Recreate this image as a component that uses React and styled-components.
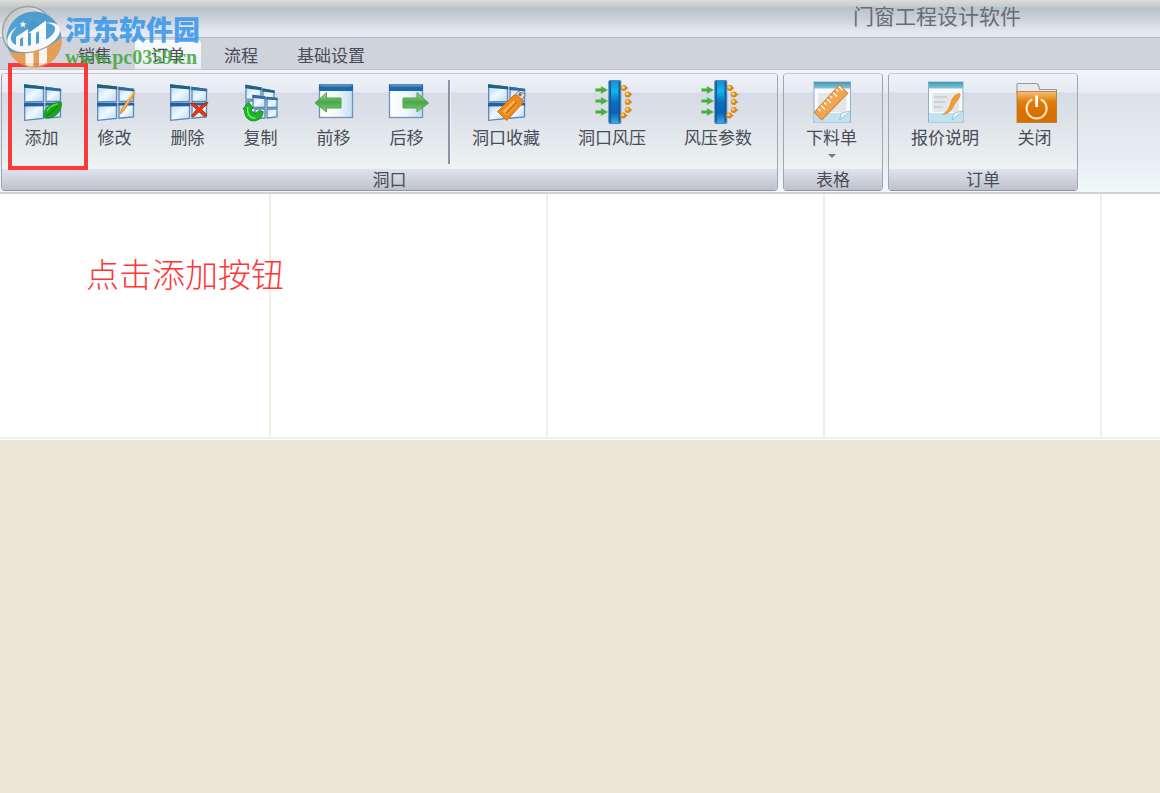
import React, { useState } from "react";
import styled, { createGlobalStyle } from "styled-components";

const Pane = ({ points }) => (
  <polygon points={points} fill="url(#glass)" stroke="#5b88b5" strokeWidth="1.3" />
);

const WindowShape = () => (
  <g>
    <path d="M4 4.4 41 9V37.4L4 41Z" fill="#dbe4ee" />
    <Pane points="4.7,5 23.5,7 23.5,21.5 4.7,22" />
    <Pane points="26,7.5 40.5,9.5 40.5,21.5 26,21.5" />
    <Pane points="4.7,24 23.5,24 23.5,38.4 4.7,40.3" />
    <Pane points="26,24 40.5,24 40.5,36.8 26,38.2" />
    <path d="M4 4.3 24.2 6.4V9.6L4 7.8Z" fill="#22617c" />
    <path d="M25.4 6.8 41.2 8.8V11.6L25.4 10Z" fill="#2f6b9f" />
    <path d="M4 22.8H24.2V26.2L4 26.6ZM25.4 22.8H41.2V25.6H25.4Z" fill="#2261a3" />
  </g>
);

const AddIcon = () => (
  <Icon>
    <WindowShape />
    <path d="M24.5 37.8C22 28 31 22.5 41.3 22.2 42.5 31 35 39.5 24.5 37.8Z" fill="#1aa51a" stroke="#118411" strokeWidth="0.7" />
    <path d="M26.5 36C31 33 34.5 29.5 38 25.5" fill="none" stroke="#0c6f14" />
    <path d="M27 31C29 27.5 32.5 25 37.5 24" fill="none" stroke="#5fd644" strokeWidth="1.6" />
  </Icon>
);

const EditIcon = () => (
  <Icon>
    <WindowShape />
    <path d="M41.8 10.5 40.8 15.5 30.5 31 27.6 33.8 28.2 29.5Z" fill="#f39a1f" stroke="#dd8427" strokeWidth="0.8" />
    <path d="M41 11.5 29.5 30" fill="none" stroke="#ffd18a" />
  </Icon>
);

const DeleteIcon = () => (
  <Icon>
    <WindowShape />
    <path
      d="M24 23.2 27 23 33 27.5 39 22.8 42 22.5 35.8 29.5 41 35 38.5 36.8 33 31.8 28 36.5 25.5 36 30.5 29.5Z"
      fill="#e03a12"
      stroke="#b32408"
      strokeWidth="0.9"
    />
  </Icon>
);

const CopyIcon = () => (
  <Icon>
    <Pane points="7,5.5 22,8 22,20 7,19" />
    <Pane points="24,9 35,11 35,20 24,20" />
    <Pane points="7,21 17,21 17,32 7,33" />
    <path d="M6.3 4.8 22.6 7.3V10.4L6.3 8.2ZM23.4 8.4 35.6 10.4V13L23.4 11.4Z" fill="#22617c" />
    <Pane points="14,15.5 26,17 26,27.5 14,27.5" />
    <Pane points="28,17.5 38,18.5 38,27.5 28,27.5" />
    <Pane points="16,29 26,29 26,38 16,39" />
    <Pane points="28,29 38,29 38,37 28,38" />
    <path d="M13.4 14.8 26.6 16.4V19.2L13.4 17.8ZM27.4 16.8 38.6 17.8V20.2L27.4 19.4Z" fill="#2f6b9f" />
    <path
      d="M9.5 22 14.5 28.5H12.5C12 33.5 16.5 35 20 30.5L24.2 31.5C24 37.5 19 41.5 13 40.8 8 40 5.2 35 5.6 29.5L4 29Z"
      fill="#1db526"
      stroke="#0f8a1a"
      strokeWidth="0.9"
    />
    <path d="M8.8 27C7.8 34 11 38.5 16.5 38" fill="none" stroke="#7df06f" strokeWidth="1.3" />
  </Icon>
);

const AppWindow = ({ x }) => (
  <g>
    <rect x={x} y="5" width="33" height="32.5" fill="url(#sheet)" stroke="#6f93bd" strokeWidth="1.3" />
    <rect x={x - 0.5} y="4.5" width="34" height="6.5" fill="#1d69a9" />
    <rect x={x + 1} y="5.2" width="31" height="1.4" fill="#5f97c4" />
  </g>
);

const ForwardIcon = () => (
  <Icon>
    <AppWindow x={7.5} />
    <path d="M3 23 14.5 12.5V18H29V28H14.5V32Z" fill="url(#leaf)" stroke="#56a254" />
  </Icon>
);

const BackIcon = () => (
  <Icon>
    <AppWindow x={4.5} />
    <path d="M43.6 23 32 12.5V18H18V28H32V32Z" fill="url(#leaf)" stroke="#56a254" />
  </Icon>
);

const FavoriteIcon = () => (
  <Icon>
    <WindowShape />
    <path d="M30 15.5 34 11.5 41.5 14 38.5 19.5Z" fill="#d7dade" stroke="#7d8186" />
    <circle cx="36" cy="14.5" r="1.5" fill="#6d7073" />
    <path d="M13.5 31.5 29.5 15.5 33 15 38.7 20.5 38 24 22.7 40.5Z" fill="#ee8b17" stroke="#cf7414" />
    <path d="M18.5 31.5 29.5 20.5 33.5 24 23 35.5Z" fill="#f7b45c" />
    <path d="M22 33.5 32.5 22.5" fill="none" stroke="#d9740f" strokeWidth="2.4" />
  </Icon>
);

const WindIcon = () => (
  <Icon>
    {[10, 21, 32].map((y) => (
      <path
        key={y}
        d={`M5.5 ${y - 1.5}H11V${y - 3.8}L18 ${y}L11 ${y + 3.8}V${y + 1.5}H5.5Z`}
        fill="#48ac3e"
        stroke="#8fcf8a"
        strokeWidth="0.6"
      />
    ))}
    <rect x="18.8" y="0.5" width="12" height="43" rx="1" fill="url(#bar)" stroke="#5689b8" />
    <path d="M20.2 1.5V42.5M29.4 1.5V42.5" stroke="#1c5690" strokeWidth="1.6" />
    {[[33.8, 8], [37.8, 14.5], [37.8, 22], [37.8, 30], [33.2, 35.5]].map(([x, y]) => (
      <g key={y}>
        <path d={`M${x} ${y - 2}L${x + 5} ${y}L${x} ${y + 2}Z`} fill="#b9783a" />
        <circle cx={x} cy={y} r="3" fill="#da8722" />
        <circle cx={x - 0.6} cy={y - 0.8} r="1.5" fill="#ffd35c" />
      </g>
    ))}
  </Icon>
);

const Sheet = ({ x, width }) => (
  <g>
    <rect x={x} y="2" width={width} height="40" fill="#f7fbfd" stroke="#8cb2c4" />
    <rect x={x} y="2" width={width} height="6.5" fill="url(#teal)" />
    <rect x={x + 0.5} y="33" width={width - 1} height="8.5" fill="#c0e3f1" />
    <path d={`M${x + 4} 13H${x + width - 4}V32H${x + 4}Z`} fill="#e4e6ea" />
    <path d={`M${x + width - 11} 40 ${x + width - 9} 33 ${x + width} 31Z`} fill="#eef8fc" stroke="#91b9ce" strokeWidth="0.8" />
  </g>
);

const CutListIcon = () => (
  <Icon>
    <Sheet x={4} width={36.5} />
    <path d="M4.3 32.3 29.3 5 37.7 13.3 11.7 40Z" fill="#efa552" stroke="#dc8536" strokeWidth="1.2" />
    <path
      d="M8.2 28.5 10.5 31 M11 25.5 15 29.5M14 22.2 16.3 24.6M17 19 21 23M20 15.8 22.3 18.2M23 12.5 27 16.5M26 9.2 28.3 11.6M29 6.5 33 10.5"
      fill="none"
      stroke="#fff1d8"
      strokeWidth="1.6"
    />
  </Icon>
);

const QuoteIcon = () => (
  <Icon>
    <Sheet x={5.5} width={34.5} />
    <path d="M11 17H24M11 22H22M11 27H20" stroke="#cdd1d8" strokeWidth="1.8" />
    <path d="M37 13.5C38 18 34.5 19.5 31.5 24.5 28.5 30.5 26 34 19.5 34.5 23.5 32 26 29 27.5 23.5 29 17.5 32.5 13.5 37 13.5Z" fill="#ee9d36" stroke="#e08e30" strokeWidth="0.6" />
  </Icon>
);

const CloseIcon = () => (
  <Icon>
    <path d="M4 13V4.5Q4 3.5 5 3.5H23Q25 3.5 25.6 5.5L26.5 9.5H43.5V13Z" fill="#e7e9ec" stroke="#97999d" strokeWidth="1.1" />
    <rect x="4" y="11.5" width="39.5" height="31" fill="url(#folder)" stroke="#b07a35" strokeWidth="0.8" />
    <path d="M18.6 19.8A10 10 0 1 0 28.6 19.8" fill="none" stroke="#fbe5c0" strokeWidth="2.2" strokeLinecap="round" />
    <path d="M23.6 15.5V27" stroke="#fffaf0" strokeWidth="2.8" />
  </Icon>
);

const Gradient = ({ id, stops, x2 = 0, y2 = 1 }) => (
  <linearGradient id={id} x1="0" y1="0" x2={x2} y2={y2}>
    {stops.map((color, i) => (
      <stop key={i} offset={i / (stops.length - 1)} stopColor={color} />
    ))}
  </linearGradient>
);

const Gradients = () => (
  <Defs aria-hidden="true">
    <defs>
      <Gradient id="glass" x2={1} stops={["#b9d9f2", "#eef8ff", "#b9d8f4"]} />
      <Gradient id="sheet" x2={1} y2={0} stops={["#ffffff", "#f4f8fc", "#c4def2"]} />
      <Gradient id="leaf" stops={["#a5dc8f", "#48a64c", "#86d172"]} />
      <Gradient id="bar" stops={["#1b8ed2", "#12b4f0", "#0a6fc2", "#0a63b6", "#38aeea"]} />
      <Gradient id="teal" stops={["#4598b4", "#83c4da"]} />
      <Gradient id="folder" stops={["#f6c07c", "#e07d0a", "#d87000", "#d87000"]} />
      <Gradient id="metal" x2={1} stops={["#b5b5b5", "#f1f1f1", "#c4c4c4"]} />
    </defs>
  </Defs>
);

const Logo = () => (
  <LogoSvg viewBox="0 0 64 68" aria-hidden="true">
    <circle cx="28" cy="32" r="25.5" fill="url(#metal)" stroke="#989898" strokeWidth="1.5" />
    <circle cx="28" cy="32" r="22.5" fill="none" stroke="#c9c9c9" />
    <circle cx="34" cy="39" r="27.5" fill="#3a96cd" />
    <path d="M61.5 36A27.5 27.5 0 0 1 9 51C22 57 54 48 61.5 36Z" fill="#ea9540" />
    <circle cx="34" cy="27" r="6" fill="#2b83b9" opacity="0.5" />
    <path
      d="M18 26C3 35 3 51 22 52 41 53 60 41 60 30 60 24 53 21 45 23 52 23 56 26 55 30 53 38 37 46 23 46 9 46 7 36 18 26Z"
      fill="#ffffff"
    />
    <path d="M16 46V37L28 29V46H23V37L20 39V46ZM31 46V33H28.5L46 20.5V42L39 44V31L36 33V45Z" fill="#ffffff" />
    <path d="M25.5 53.5 33.5 52.5V66.5H30L25.5 65ZM39 51 47 47.5V63L39 66Z" fill="#ffffff" opacity="0.95" />
    <path d="M23 21 24 23.3 26.5 23.5 24.5 25 25.2 27.4 23 26 20.8 27.4 21.5 25 19.5 23.5 22 23.3Z" fill="#ffffff" />
  </LogoSvg>
);

const tabs = ["销售", "订单", "流程", "基础设置"];

const groups = [
  {
    title: "洞口",
    items: [
      { label: "添加", icon: AddIcon },
      { label: "修改", icon: EditIcon },
      { label: "删除", icon: DeleteIcon },
      { label: "复制", icon: CopyIcon },
      { label: "前移", icon: ForwardIcon },
      { label: "后移", icon: BackIcon, divider: true },
      { label: "洞口收藏", icon: FavoriteIcon, width: 106 },
      { label: "洞口风压", icon: WindIcon, width: 106 },
      { label: "风压参数", icon: WindIcon, width: 106 },
    ],
  },
  {
    title: "表格",
    items: [{ label: "下料单", icon: CutListIcon, width: 89, menu: true }],
  },
  {
    title: "订单",
    items: [
      { label: "报价说明", icon: QuoteIcon, width: 106 },
      { label: "关闭", icon: CloseIcon },
    ],
  },
];

const App = () => {
  const [active, setActive] = useState("订单");

  return (
    <Page>
      <GlobalStyle />
      <Gradients />
      <TitleBar>
        <Title>门窗工程设计软件</Title>
      </TitleBar>
      <TabBar role="tablist">
        {tabs.map((tab) => (
          <Tab
            key={tab}
            type="button"
            role="tab"
            aria-selected={tab === active}
            $active={tab === active}
            onClick={() => setActive(tab)}
          >
            {tab}
          </Tab>
        ))}
      </TabBar>
      <Ribbon>
        {groups.map((group) => (
          <Group key={group.title}>
            <GroupBody>
              {group.items.map(({ label, icon: ItemIcon, width, menu, divider }) => (
                <React.Fragment key={label}>
                  <Tool type="button" $width={width}>
                    <ItemIcon />
                    <Label>{label}</Label>
                    {menu && <Caret />}
                  </Tool>
                  {divider && <Divider />}
                </React.Fragment>
              ))}
            </GroupBody>
            <GroupTitle>{group.title}</GroupTitle>
          </Group>
        ))}
      </Ribbon>
      <Openings>
        <Cell />
        <Cell />
        <Cell />
        <Cell />
        <Cell />
        <Note>点击添加按钮</Note>
      </Openings>
      <Highlight />
      <Watermark>
        <Logo />
        <SiteText>
          <SiteName>河东软件园</SiteName>
          <SiteUrl>www.pc0359.cn</SiteUrl>
        </SiteText>
      </Watermark>
    </Page>
  );
};

const GlobalStyle = createGlobalStyle`
  * {
    box-sizing: border-box;
  }
  body {
    margin: 0;
    background: #ece8d8;
    color: #484c56;
    font-family: "Noto Sans CJK SC", "Liberation Sans", sans-serif;
    font-size: 17px;
    line-height: 20px;
  }
  button {
    font: inherit;
    color: inherit;
    border: 0;
    padding: 0;
    background: none;
  }
`;

const Page = styled.div`
  position: relative;
  min-height: 100vh;
  overflow: hidden;
`;

const Defs = styled.svg`
  position: absolute;
  width: 0;
  height: 0;
`;

const TitleBar = styled.header`
  display: flex;
  justify-content: flex-end;
  padding: 1px 139px 8px 0;
  border-bottom: 1px solid #b4b8c2;
  background: linear-gradient(#dcdddb 0, #c9cccd 6px, #b9c2cb 8px, #c9ced4 17px, #e4e8f0 32px, #e6eaf4 100%);
`;

const Title = styled.h1`
  margin: 0;
  font-size: 21px;
  font-weight: 400;
  line-height: 28px;
  color: #686d76;
`;

const TabBar = styled.nav`
  display: flex;
  gap: 7px;
  height: 32px;
  padding: 2px 0 0 62px;
  background: #cfd3dc;
  border-bottom: 1px solid #c4c7ce;
`;

const Tab = styled.button`
  height: 29px;
  padding: 0 16px;
  border-radius: 4px 4px 0 0;
  background: ${(props) => (props.$active ? "linear-gradient(#fbfcfe, #e9edf4)" : "none")};
  box-shadow: ${(props) => (props.$active ? "0 0 2px #a9e4ea" : "none")};
`;

const Ribbon = styled.section`
  display: flex;
  gap: 5px;
  padding: 3px 1px 1px;
  border-bottom: 2px solid #d2d2d3;
  background: linear-gradient(#f3f4fa 0, #e7ebf3 22px, #dde1ea 24px, #e9eef2 75%, #effafa 100%);
`;

const Group = styled.div`
  border: 1px solid;
  border-color: #c5c7cb #a3a6ae #8f929a;
  border-radius: 4px;
  overflow: hidden;
`;

const GroupBody = styled.div`
  display: flex;
  height: 95px;
  padding: 6px 6px 0 3px;
  background: linear-gradient(#eff2f7 0, #e6eaf3 18px, #d6dbe6 19px, #dbe0e8 40px, #edf3f1 100%);
`;

const Tool = styled.button`
  display: flex;
  flex-direction: column;
  align-items: center;
  width: ${(props) => props.$width || 73}px;
`;

const Icon = styled.svg.attrs({ viewBox: "0 0 44 44", "aria-hidden": true })`
  width: 44px;
  height: 44px;
`;

const Label = styled.span`
  margin-top: 3px;
`;

const Caret = styled.span`
  margin-top: 7px;
  border: 4px solid transparent;
  border-top-color: #777a80;
  border-bottom: 0;
`;

const Divider = styled.span`
  width: 3px;
  height: 84px;
  margin: 0 2px 0 5px;
  background: #8f91a8;
  border-right: 1px solid #f2f4f8;
`;

const GroupTitle = styled.div`
  height: 21px;
  line-height: 19px;
  text-align: center;
  background: linear-gradient(#e0e3ed, #d0d3de 50%, #bec1cd);
`;

const Openings = styled.main`
  position: relative;
  display: grid;
  grid-template-columns: 271px repeat(4, 277px);
  height: 246px;
  background: #ffffff;
  border-bottom: 1px solid #ffffff;
`;

const Cell = styled.div`
  border-right: 2px solid #f1eee3;
  border-bottom: 2px solid #f1eee3;
`;

const Note = styled.div`
  position: absolute;
  top: 59px;
  left: 86px;
  font-size: 33px;
  font-weight: 300;
  line-height: 40px;
  color: #ff3636;
`;

const Highlight = styled.div`
  position: absolute;
  top: 63px;
  left: 8px;
  width: 80px;
  height: 107px;
  border: 4px solid #fb3a3c;
  pointer-events: none;
`;

const Watermark = styled.div`
  position: absolute;
  top: 0;
  left: 0;
  display: flex;
  opacity: 0.85;
  pointer-events: none;
`;

const LogoSvg = styled.svg`
  width: 64px;
  height: 68px;
`;

const SiteText = styled.div`
  padding: 13px 0 0 1px;
`;

const SiteName = styled.div`
  font-size: 27px;
  font-weight: 900;
  line-height: 32px;
  color: #3296ec;
`;

const SiteUrl = styled.div`
  font-family: "Liberation Serif", serif;
  font-size: 20px;
  font-weight: 700;
  line-height: 24px;
  color: #42a63a;
`;

export default App;
